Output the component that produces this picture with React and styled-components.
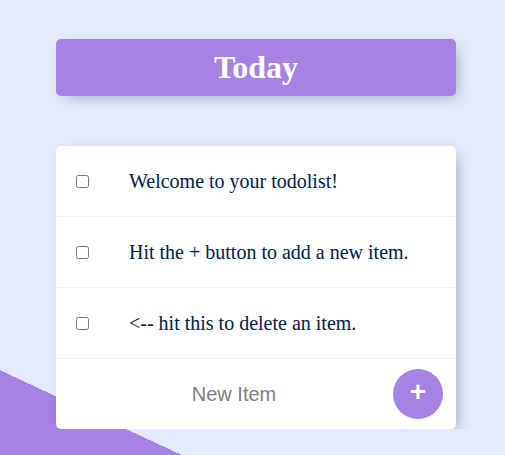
import React from "react";
import styled, { createGlobalStyle } from "styled-components";

const GlobalStyle = createGlobalStyle`
  html {
    background-color: #e4e9fd;
    background-image: linear-gradient(25deg, #a683e3 50%, #e4e9fd 50%);
    background-size: 505px 976px;
    background-repeat: no-repeat;
    font-family: "Liberation Serif", "Times New Roman", serif;
  }
  body {
    margin: 0;
  }
`;

const Page = styled.div`
  padding: 39px 0 0 56px;
  width: 400px;
  display: flex;
  flex-direction: column;
  gap: 50px;
`;

const Box = styled.div`
  width: 400px;
  background: ${(props) => (props.$heading ? "#a683e3" : "#fff")};
  border-radius: 5px;
  box-shadow: 5px 5px 15px -5px rgba(0, 0, 0, 0.3);
  text-align: ${(props) => (props.$heading ? "center" : "left")};
`;

const Title = styled.h1`
  margin: 0;
  padding: 10px;
  color: #fff;
  font-size: 32px;
  font-weight: bold;
  line-height: 37px;
`;

const Item = styled.div`
  min-height: 70px;
  display: flex;
  align-items: center;
  border-bottom: 1px solid #f1f1f1;
`;

const Check = styled.input`
  margin: 20px;
  width: 13px;
  height: 13px;
`;

const Text = styled.p`
  margin: 0;
  padding: 20px;
  font-size: 20px;
  font-weight: 200;
  color: #00204a;
`;

const NewForm = styled.form`
  height: 70px;
  display: flex;
  align-items: center;
`;

const NewInput = styled.input`
  margin-left: 28px;
  width: 300px;
  height: 60px;
  padding: 0;
  border: none;
  text-align: center;
  font-family: "Liberation Sans", Arial, sans-serif;
  font-size: 20px;
  font-weight: 200;
  background: transparent;
  &::placeholder {
    color: grey;
    opacity: 1;
  }
  &:focus {
    outline: none;
  }
`;

const AddButton = styled.button`
  margin-left: 9px;
  width: 50px;
  height: 50px;
  border-radius: 50%;
  border: 0;
  padding: 0 0 5px;
  background-color: #a683e3;
  color: #fff;
  font-family: "Liberation Sans", Arial, sans-serif;
  font-size: 28px;
  font-weight: bold;
  line-height: 1;
  display: flex;
  align-items: center;
  justify-content: center;
`;

const items = [
  "Welcome to your todolist!",
  "Hit the + button to add a new item.",
  "<-- hit this to delete an item.",
];

export default function App() {
  return (
    <>
      <GlobalStyle />
      <Page>
        <Box $heading>
          <Title>Today</Title>
        </Box>
        <Box>
          {items.map((text) => (
            <Item key={text}>
              <Check type="checkbox" />
              <Text>{text}</Text>
            </Item>
          ))}
          <NewForm onSubmit={(e) => e.preventDefault()}>
            <NewInput type="text" placeholder="New Item" />
            <AddButton type="submit">+</AddButton>
          </NewForm>
        </Box>
      </Page>
    </>
  );
}
